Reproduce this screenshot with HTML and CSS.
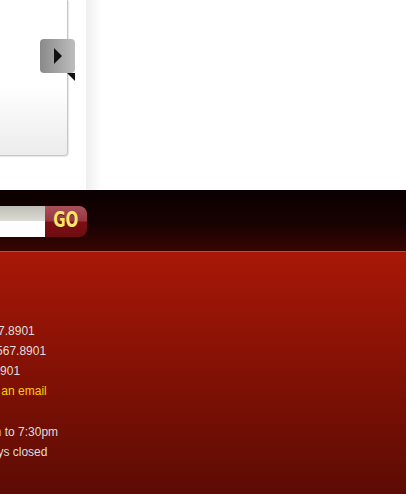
FILE: index.html
```html
<!DOCTYPE html>
<html lang="en">
<head>
    <meta charset="UTF-8">
    <meta name="viewport" content="width=device-width, initial-scale=1.0">
    <title>Contact</title>
    <link rel="stylesheet" href="styles.css">
</head>
<body>
    <div class="top">
        <div class="panel">
            <div class="panel-body"></div>
            <a class="next" href="#"><span class="arrow"></span></a>
            <span class="fold"></span>
        </div>
        <div class="page-shadow"></div>
    </div>
    <div class="searchbar">
        <form class="search">
            <input class="search-input" type="text">
            <button class="go" type="button"><span>GO</span></button>
        </form>
    </div>
    <div class="footer">
        <ul class="contact">
            <li>Phone: 1.234.567.8901</li>
            <li>Toll Free: 1.234.567.8901</li>
            <li>Fax: 1.234.567.8901</li>
            <li class="mail">E-mail: Shoot us an email</li>
            <li class="spacer"></li>
            <li>Mon - Fri 9:00am to 7:30pm</li>
            <li>Sunday &amp; holidays closed</li>
        </ul>
    </div>
</body>
</html>
```

FILE: styles.css
```css
body {
    margin: 0;
    padding: 0;
    overflow: hidden;
    background-color: #fff;
    font-family: "Liberation Sans", Arial, sans-serif;
}
.top {
    height: 190px;
    display: flex;
}
.panel {
    position: relative;
    width: 88px;
    height: 156px;
    margin-left: -20px;
    flex-shrink: 0;
}
.panel-body {
    height: 100%;
    box-sizing: border-box;
    border-right: 1px solid #c8c8c8;
    border-bottom: 1px solid #c8c8c8;
    border-bottom-right-radius: 4px;
    background: linear-gradient(to bottom, #fff 0%, #fff 55%, #ececec 100%);
    box-shadow: 1px 1px 1px #e6e6e6;
}
.next {
    position: absolute;
    left: 60px;
    top: 39px;
    width: 35px;
    height: 34px;
    border-radius: 4px;
    background: linear-gradient(to right, #8a8a8a, #bdbdbd);
}
.arrow {
    position: absolute;
    left: 14px;
    top: 9px;
    width: 0;
    height: 0;
    border-top: 8px solid transparent;
    border-bottom: 8px solid transparent;
    border-left: 8px solid #111;
}
.fold {
    position: absolute;
    left: 87px;
    top: 73px;
    width: 0;
    height: 0;
    border-top: 8px solid #111;
    border-left: 8px solid transparent;
}
.page-shadow {
    width: 16px;
    margin-left: 18px;
    background: linear-gradient(to right, #efefef, #fff);
}
.searchbar {
    height: 62px;
    box-sizing: border-box;
    padding-top: 16px;
    border-bottom: 1px solid #d84030;
    background: linear-gradient(to bottom, #0c0000 0%, #170202 55%, #380500 100%);
}
.search {
    display: flex;
    margin: 0 0 0 -60px;
}
.search-input {
    width: 105px;
    height: 31px;
    border: 0;
    padding: 0;
    box-sizing: border-box;
    background: linear-gradient(to bottom, #bdbdb5 0%, #dcdcd4 48%, #fff 48%, #fff 100%);
}
.go {
    width: 42px;
    height: 31px;
    border: 0;
    padding: 0 0 2px 0;
    border-radius: 0 8px 8px 0;
    background: linear-gradient(to bottom, #a8525a 0%, #973640 48%, #7c1014 52%, #6e0c10 100%);
    color: #fbe56a;
    font-family: "DejaVu Sans Condensed", "DejaVu Sans", sans-serif;
    font-weight: bold;
    font-size: 21px;
    line-height: 29px;
    text-shadow: 0 1px 0 #5a0a0a;
}
.go span {
    display: inline-block;
    transform: scaleX(0.8);
}
.footer {
    height: 242px;
    padding-top: 69px;
    box-sizing: border-box;
    background: linear-gradient(to bottom, #a81808 0%, #7e1004 55%, #5c0c04 100%);
}
.contact {
    list-style: none;
    margin: 0 0 0 -90px;
    padding: 0;
    color: #dedede;
    font-size: 12px;
    line-height: 20px;
    white-space: nowrap;
}
.contact .mail {
    color: #ffcc00;
}
.contact .spacer {
    height: 21px;
}
```
